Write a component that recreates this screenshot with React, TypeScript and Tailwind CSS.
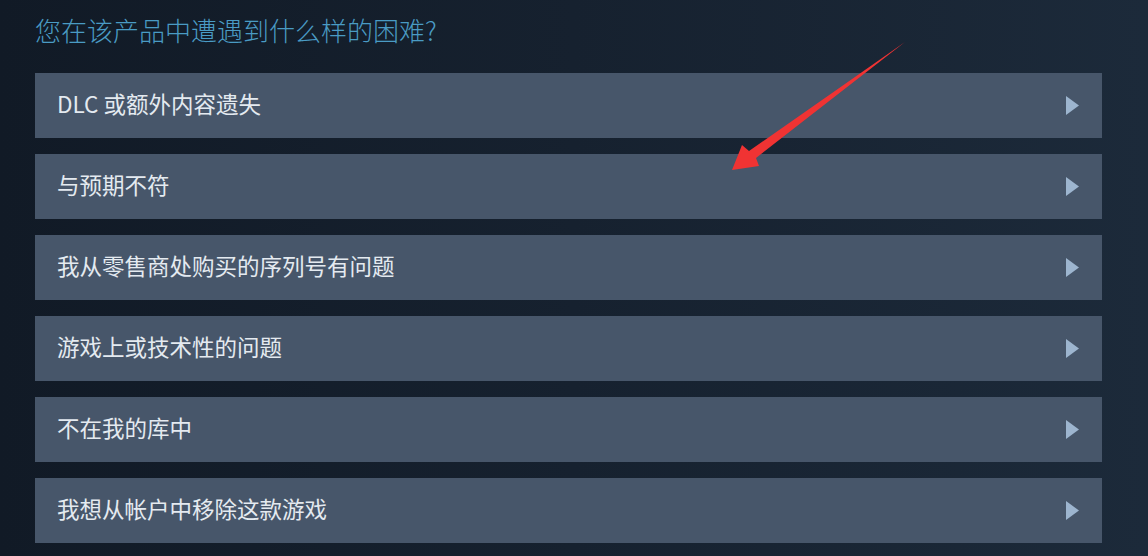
const items = [
  "DLC 或额外内容遗失",
  "与预期不符",
  "我从零售商处购买的序列号有问题",
  "游戏上或技术性的问题",
  "不在我的库中",
  "我想从帐户中移除这款游戏",
];

function Row({ label }: { label: string }) {
  return (
    <div className="flex h-[65px] items-center justify-between bg-[#47566a] pl-[22px] pr-[22px]">
      <span className="pb-[5px] text-[22.5px] leading-none text-[#e4eaf0]">{label}</span>
      <svg width="13" height="19" viewBox="0 0 13 19" className="mr-[1px]">
        <polygon points="0,0 13,9.5 0,19" fill="#9db5cf" />
      </svg>
    </div>
  );
}

export default function App() {
  return (
    <div
      className="relative h-[556px] w-[1148px] overflow-hidden bg-gradient-to-r from-[#111a26] via-[#16212f] to-[#1c2a3a]"
      style={{ fontFamily: '"Noto Sans CJK SC", "Noto Sans", sans-serif' }}
    >
      <div className="ml-[35px] w-[1067px] pt-[10px]">
        <h1 className="h-[40px] text-[26px] font-light leading-[40px] text-[#4a9bc4]">
          您在该产品中遭遇到什么样的困难?
        </h1>
        <div className="mt-[23px] flex flex-col gap-4">
          {items.map((it) => (
            <Row key={it} label={it} />
          ))}
        </div>
      </div>

      {/* annotation arrow */}
      <svg
        className="pointer-events-none absolute left-0 top-0"
        width="1148"
        height="556"
        viewBox="0 0 1148 556"
      >
        <polygon
          points="905,42 756,158 759,166 732,170 742,145 749,151"
          fill="#f03333"
        />
      </svg>
    </div>
  );
}
